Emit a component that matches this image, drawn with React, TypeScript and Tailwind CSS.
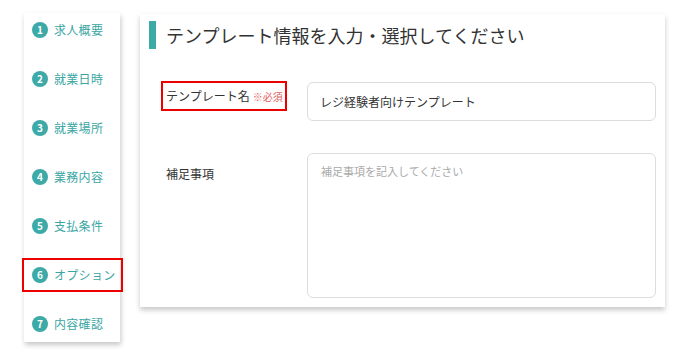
const steps = ["求人概要", "就業日時", "就業場所", "業務内容", "支払条件", "オプション", "内容確認"];

function StepItem({ n, label, marked }: { n: number; label: string; marked?: boolean }) {
  return (
    <li className="relative flex h-[34px] items-center gap-[6px] pl-[8px]">
      <span className="flex h-[16px] w-[16px] items-center justify-center rounded-full bg-[#3daaa8] text-[10px] font-bold leading-none text-white">
        {n}
      </span>
      <span className="text-[12px] tracking-[0.3px] text-[#3aa6a4]">{label}</span>
      {marked && <span className="pointer-events-none absolute -left-[2px] -right-[3px] top-0 bottom-0 border-2 border-[#ee0000]" />}
    </li>
  );
}

export default function App() {
  return (
    <div
      className="flex h-[360px] w-[690px] items-start bg-white pl-[24px]"
      style={{ fontFamily: '"Noto Sans CJK JP", "Noto Sans", sans-serif' }}
    >
      <nav className="mt-[13px] w-[96px] bg-white pb-[1px] shadow-[1px_3px_5px_rgba(0,0,0,0.22)]">
        <ul className="flex flex-col gap-[15px]">
          {steps.map((s, i) => (
            <StepItem key={s} n={i + 1} label={s} marked={i === 5} />
          ))}
        </ul>
      </nav>

      <main className="ml-[20px] mt-[14px] w-[525px] bg-white px-[9px] pt-[7px] pb-[9px] shadow-[0_3px_5px_rgba(0,0,0,0.22)]">
        <div className="flex items-center gap-[10px]">
          <div className="h-[28px] w-[7px] bg-[#3daaa8]" />
          <h1 className="text-[18px] leading-[28px] text-[#333]">テンプレート情報を入力・選択してください</h1>
        </div>

        <div className="mt-[33px] flex flex-col gap-[32px] pl-[17px]">
          <div className="flex items-start">
            <div className="w-[141px] shrink-0">
              <div className="relative inline-flex items-baseline gap-[3px] leading-[18px]">
                <span className="text-[12px] text-[#333]">テンプレート名</span>
                <span className="text-[10px] text-[#e06060]">※必須</span>
                <span className="pointer-events-none absolute -left-[5px] -right-[4px] -top-[6px] -bottom-[5px] border-2 border-[#ee0000]" />
              </div>
            </div>
            <div className="flex h-[39px] flex-1 items-center rounded-[6px] border border-[#dcdcdc] px-[12px] text-[12px] text-[#333]">
              レジ経験者向けテンプレート
            </div>
          </div>

          <div className="flex items-start">
            <div className="mt-[12px] w-[141px] shrink-0 text-[12px] leading-[18px] text-[#333]">補足事項</div>
            <textarea
              placeholder="補足事項を記入してください"
              className="h-[145px] flex-1 resize-none rounded-[6px] border border-[#dcdcdc] px-[13px] py-[9px] text-[11px] leading-[16px] text-[#333] outline-none placeholder:text-[#aaa]"
            />
          </div>
        </div>
      </main>
    </div>
  );
}
